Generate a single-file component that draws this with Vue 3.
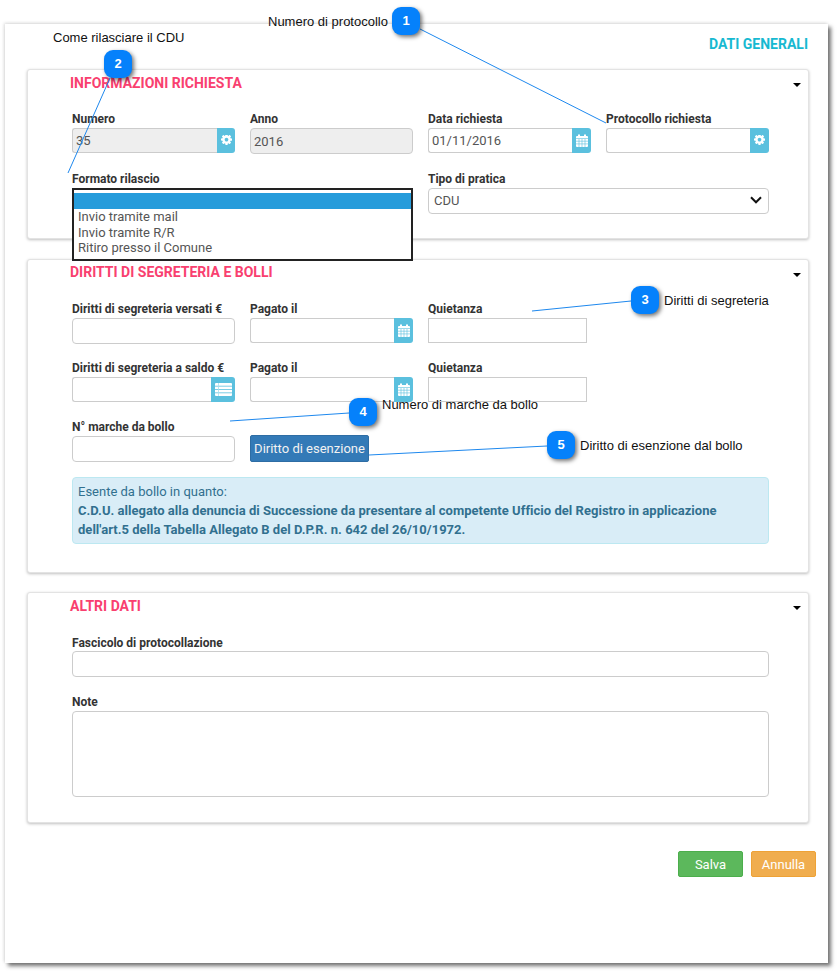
<script setup>
const callouts = [
  { n: 1, x: 392, y: 7, text: 'Numero di protocollo', tx: 268, ty: 14 },
  { n: 2, x: 104, y: 50, text: 'Come rilasciare il CDU', tx: 53, ty: 30 },
  { n: 3, x: 631, y: 286, text: 'Diritti di segreteria', tx: 664, ty: 293 },
  { n: 4, x: 349, y: 398, text: 'Numero di marche da bollo', tx: 382, ty: 397 },
  { n: 5, x: 547, y: 431, text: 'Diritto di esenzione dal bollo', tx: 580, ty: 438 }
]
const lines = [
  [420, 29, 606, 123],
  [110, 78, 68, 173],
  [631, 301, 532, 311],
  [349, 413, 230, 421],
  [547, 446, 369, 455]
]
const cog = 'M1024 640q0-106-75-181t-181-75-181 75-75 181 75 181 181 75 181-75 75-181zm512-109v222q0 12-8 23t-20 13l-185 28q-19 54-39 91 35 50 107 138 10 12 10 25t-9 23q-27 37-99 108t-94 71q-12 0-26-9l-138-108q-44 23-91 38-16 136-29 186-7 28-36 28h-222q-14 0-24.5-8.5t-11.5-21.5l-28-184q-49-16-90-37l-141 107q-10 9-25 9-14 0-25-11-126-114-165-168-7-10-7-23 0-12 8-23 15-21 51-66.5t54-70.5q-27-50-41-99l-183-27q-13-2-21-12.5t-8-23.5v-222q0-12 8-23t19-13l186-28q14-46 39-92-40-57-107-138-10-12-10-24 0-10 9-23 26-36 98.5-107.5t94.5-71.5q13 0 26 10l138 107q44-23 91-38 16-136 29-186 7-28 36-28h222q14 0 24.5 8.5t11.5 21.5l28 184q49 16 90 37l142-107q9-9 24-9 13 0 25 10 129 119 165 170 7 8 7 22 0 12-8 23-15 21-51 66.5t-54 70.5q26 50 41 98l183 28q13 2 21 12.5t8 23.5z'
</script>

<template>
  <div class="page">
    <div class="window">
      <h1 class="main-title">DATI GENERALI</h1>

      <section class="panel p1">
        <h2 class="panel-title">INFORMAZIONI RICHIESTA</h2>
        <span class="caret"></span>
        <div class="grid first">
          <div class="field">
            <label>Numero</label>
            <div class="group disabled">
              <input class="ctl" value="35" readonly />
              <span class="addon narrow"><svg width="11" height="11" viewBox="0 0 1536 1536"><path :d="cog" fill="#fff" /></svg></span>
            </div>
          </div>
          <div class="field">
            <label>Anno</label>
            <input class="ctl solo disabled-input" value="2016" readonly />
          </div>
          <div class="field">
            <label>Data richiesta</label>
            <div class="group">
              <input class="ctl" value="01/11/2016" readonly />
              <span class="addon">
                <svg width="12" height="13" viewBox="0 0 12 13"><path fill="#fff" d="M1 2h1V.5h2V2h4V.5h2V2h1a1 1 0 0 1 1 1v9a1 1 0 0 1-1 1H1a1 1 0 0 1-1-1V3a1 1 0 0 1 1-1z" /><path stroke="#5bc0de" stroke-width=".6" d="M0 4.500h12M0 7.200h12M0 9.900h12M3 5v8M6 5v8M9 5v8" /></svg>
              </span>
            </div>
          </div>
          <div class="field">
            <label>Protocollo richiesta</label>
            <div class="group">
              <input class="ctl" readonly />
              <span class="addon"><svg width="11" height="11" viewBox="0 0 1536 1536"><path :d="cog" fill="#fff" /></svg></span>
            </div>
          </div>
        </div>
        <div class="grid second">
          <div class="field span2 list-field">
            <label>Formato rilascio</label>
            <div class="select-spot">
              <div class="listbox">
                <div class="opt selected"></div>
                <div class="opt">Invio tramite mail</div>
                <div class="opt">Invio tramite R/R</div>
                <div class="opt">Ritiro presso il Comune</div>
              </div>
            </div>
          </div>
          <div class="field span2">
            <label>Tipo di pratica</label>
            <div class="select">
              <span>CDU</span>
              <svg width="12" height="8" viewBox="0 0 12 8"><path d="M1 1.300l5 5 5-5" fill="none" stroke="#111" stroke-width="2" /></svg>
            </div>
          </div>
        </div>
      </section>

      <section class="panel p2">
        <h2 class="panel-title">DIRITTI DI SEGRETERIA E BOLLI</h2>
        <span class="caret"></span>
        <div class="grid r1">
          <div class="field">
            <label>Diritti di segreteria versati €</label>
            <input class="ctl solo tall" readonly />
          </div>
          <div class="field">
            <label>Pagato il</label>
            <div class="group">
              <input class="ctl" readonly />
              <span class="addon">
                <svg width="12" height="13" viewBox="0 0 12 13"><path fill="#fff" d="M1 2h1V.5h2V2h4V.5h2V2h1a1 1 0 0 1 1 1v9a1 1 0 0 1-1 1H1a1 1 0 0 1-1-1V3a1 1 0 0 1 1-1z" /><path stroke="#5bc0de" stroke-width=".6" d="M0 4.500h12M0 7.200h12M0 9.900h12M3 5v8M6 5v8M9 5v8" /></svg>
              </span>
            </div>
          </div>
          <div class="field">
            <label>Quietanza</label>
            <input class="ctl solo square" readonly />
          </div>
        </div>
        <div class="grid r2">
          <div class="field">
            <label>Diritti di segreteria a saldo €</label>
            <div class="group">
              <input class="ctl" readonly />
              <span class="addon wide">
                <svg width="17" height="13" viewBox="0 0 17 13"><rect width="17" height="13" rx="1" fill="#fff" /><path stroke="#5bc0de" stroke-width=".8" d="M0 3.200h17M0 6.500h17M0 9.800h17" /><path stroke="#a8e0ef" stroke-width=".8" d="M3.500 0v13" /></svg>
              </span>
            </div>
          </div>
          <div class="field">
            <label>Pagato il</label>
            <div class="group">
              <input class="ctl" readonly />
              <span class="addon">
                <svg width="12" height="13" viewBox="0 0 12 13"><path fill="#fff" d="M1 2h1V.5h2V2h4V.5h2V2h1a1 1 0 0 1 1 1v9a1 1 0 0 1-1 1H1a1 1 0 0 1-1-1V3a1 1 0 0 1 1-1z" /><path stroke="#5bc0de" stroke-width=".6" d="M0 4.500h12M0 7.200h12M0 9.900h12M3 5v8M6 5v8M9 5v8" /></svg>
              </span>
            </div>
          </div>
          <div class="field">
            <label>Quietanza</label>
            <input class="ctl solo square" readonly />
          </div>
        </div>
        <div class="grid r3">
          <div class="field">
            <label>N° marche da bollo</label>
            <input class="ctl solo tall" readonly />
          </div>
          <div class="field btn-field">
            <button class="btn-blue" type="button">Diritto di esenzione</button>
          </div>
        </div>
        <div class="alert">
          <div>Esente da bollo in quanto:</div>
          <strong>C.D.U. allegato alla denuncia di Successione da presentare al competente Ufficio del Registro in applicazione dell'art.5 della Tabella Allegato B del D.P.R. n. 642 del 26/10/1972.</strong>
        </div>
      </section>

      <section class="panel p3">
        <h2 class="panel-title">ALTRI DATI</h2>
        <span class="caret"></span>
        <div class="field full first-full">
          <label>Fascicolo di protocollazione</label>
          <input class="ctl solo tall" readonly />
        </div>
        <div class="field full note">
          <label>Note</label>
          <textarea class="ctl solo area" readonly></textarea>
        </div>
      </section>

      <div class="actions">
        <button class="btn green" type="button">Salva</button>
        <button class="btn orange" type="button">Annulla</button>
      </div>
    </div>

    <svg class="lines" width="838" height="971">
      <line v-for="(l, i) in lines" :key="i" :x1="l[0]" :y1="l[1]" :x2="l[2]" :y2="l[3]" stroke="#1e88ee" stroke-width="1" />
    </svg>
    <template v-for="c in callouts" :key="c.n">
      <div class="badge" :style="{ left: c.x + 'px', top: c.y + 'px' }">{{ c.n }}</div>
      <div class="note-label" :style="{ left: c.tx + 'px', top: c.ty + 'px' }">{{ c.text }}</div>
    </template>
  </div>
</template>

<style scoped>
.page {
  position: relative;
  width: 838px;
  height: 971px;
  background: #fff;
  overflow: hidden;
  font-family: Roboto, "Liberation Sans", sans-serif;
  padding: 24px 0 0 5px;
  box-sizing: border-box;
}
.window {
  width: 823px;
  height: 939px;
  box-sizing: border-box;
  background: #fff;
  padding: 0 19px 0 22px;
  box-shadow: 3px 3px 4px rgba(0, 0, 0, .55), -1px -1px 3px rgba(0, 0, 0, .14);
}
.main-title {
  margin: 0;
  height: 45px;
  padding-top: 11px;
  box-sizing: border-box;
  text-align: right;
  font-size: 14px;
  line-height: 18px;
  font-weight: 700;
  color: #17b9d1;
  padding-right: 1px;
}
.panel {
  position: relative;
  box-sizing: border-box;
  width: 782px;
  background: #fff;
  border: 1px solid #e3e3e3;
  border-radius: 3px;
  box-shadow: 0 1px 3px rgba(0, 0, 0, .25);
  padding: 3px 39px 0 44px;
}
.p1 { height: 170px; margin-bottom: 20px; }
.p2 { height: 314px; margin-bottom: 19px; padding-top: 2px; }
.p3 { height: 231px; }
.panel-title {
  margin: 0 0 0 -2px;
  font-size: 14px;
  line-height: 20px;
  font-weight: 700;
  color: #f9406f;
}
.caret {
  position: absolute;
  right: 7px;
  top: 13px;
  width: 0;
  height: 0;
  border-left: 4px solid transparent;
  border-right: 4px solid transparent;
  border-top: 4px solid #000;
}
.grid {
  display: grid;
  grid-template-columns: repeat(4, 163px);
  column-gap: 15px;
}
.first { margin-top: 18px; }
.second { margin-top: 17px; }
.span2 { grid-column: span 2; }
.r1 { margin-top: 19px; }
.r2 { margin-top: 16px; }
.r3 { margin-top: 17px; }
.field { min-width: 0; }
.field label {
  display: block;
  height: 17px;
  font-size: 12px;
  line-height: 16px;
  font-weight: 700;
  color: #333;
  white-space: nowrap;
}
.first-full label { height: 16px; }
.group { display: flex; height: 25px; }
.ctl {
  box-sizing: border-box;
  min-width: 0;
  flex: 1;
  height: 25px;
  border: 1px solid #ccc;
  border-right: 0;
  border-radius: 3px 0 0 3px;
  padding: 0 3px 1px;
  font: 13px Roboto, sans-serif;
  color: #555;
  background: #fff;
  outline: none;
  display: block;
}
.group.disabled .ctl { background: #eee; }
.solo {
  width: 100%;
  border-right: 1px solid #ccc;
  border-radius: 4px;
}
.tall { height: 26px; }
.disabled-input { background: #eee; height: 26px; padding: 0 3px; }
.square { border-radius: 0; width: 159px; }
.addon {
  width: 19px;
  flex: none;
  background: #5bc0de;
  border-radius: 0 3px 3px 0;
  display: flex;
  align-items: center;
  justify-content: center;
}
.addon.narrow { width: 18px; }
.addon.wide { width: 24px; }
.select-spot { position: relative; height: 26px; }
.listbox {
  position: absolute;
  left: 0;
  top: 0;
  width: 341px;
  height: 73px;
  box-sizing: border-box;
  border: 2px solid #222;
  padding-top: 3px;
  background: #fff;
  z-index: 2;
  font-size: 13px;
  color: #555;
}
.opt { height: 15.500px; line-height: 15.500px; padding-left: 4px; white-space: nowrap; }
.opt.selected { height: 16px; background: #269cdb; }
.select {
  box-sizing: border-box;
  width: 341px;
  height: 26px;
  border: 1px solid #ccc;
  border-radius: 4px;
  display: flex;
  align-items: center;
  justify-content: space-between;
  padding: 0 6px 2px 5px;
  font-size: 13px;
  color: #555;
}
.btn-field { padding-top: 16px; }
.btn-blue {
  display: block;
  box-sizing: border-box;
  width: 119px;
  height: 27px;
  background: #337ab7;
  border: 1px solid #2e6da4;
  border-radius: 2px;
  color: #f2f2f2;
  font: 13px Roboto, sans-serif;
  padding: 0;
}
.alert {
  box-sizing: border-box;
  width: 697px;
  height: 67px;
  margin-top: 15px;
  background: #d9edf7;
  border: 1px solid #bce8f1;
  border-radius: 4px;
  padding: 4px 5px;
  font-size: 13px;
  line-height: 19px;
  color: #31708f;
}
.alert strong { font-weight: 700; display: block; padding-right: 30px; letter-spacing: .03px; }
.full { width: 697px; }
.first-full { margin-top: 19px; }
.note { margin-top: 17px; }
.area { height: 86px; resize: none; }
.actions {
  display: flex;
  justify-content: flex-end;
  gap: 8px;
  margin: 28px -7px 0 0;
}
.btn {
  box-sizing: border-box;
  width: 65px;
  height: 26px;
  border-radius: 2px;
  color: #fff;
  font: 13px Roboto, sans-serif;
  padding: 0;
}
.green { background: #5cb85c; border: 1px solid #4cae4c; }
.orange { background: #f0ad4e; border: 1px solid #eea236; }
.lines { position: absolute; left: 0; top: 0; pointer-events: none; }
.badge {
  position: absolute;
  width: 28px;
  height: 28px;
  border-radius: 9px;
  background: #0581fb;
  color: #fff;
  font: 700 13px/28px "Liberation Sans", sans-serif;
  text-align: center;
  box-shadow: 2px 2px 4px rgba(0, 0, 0, .55);
}
.note-label {
  position: absolute;
  font: 13px/16px "Liberation Sans", sans-serif;
  color: #111;
  white-space: nowrap;
}
</style>
